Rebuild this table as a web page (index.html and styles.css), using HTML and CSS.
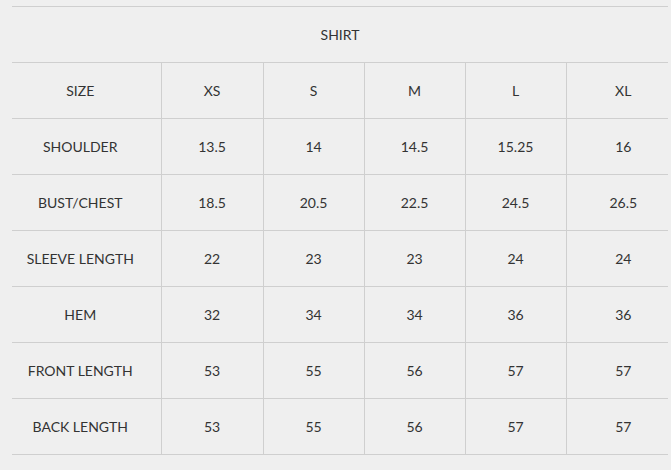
FILE: index.html
```html
<!DOCTYPE html>
<html>
<head>
<meta charset="utf-8">
<link rel="stylesheet" href="styles.css">
</head>
<body>
<table class="size-table">
  <colgroup>
    <col class="c-label"><col class="c-wide"><col class="c-std"><col class="c-std"><col class="c-std"><col class="c-last">
  </colgroup>
  <tr><td class="title" colspan="6">SHIRT</td></tr>
  <tr><td>SIZE</td><td>XS</td><td>S</td><td>M</td><td>L</td><td>XL</td></tr>
  <tr><td>SHOULDER</td><td>13.5</td><td>14</td><td>14.5</td><td>15.25</td><td>16</td></tr>
  <tr><td>BUST/CHEST</td><td>18.5</td><td>20.5</td><td>22.5</td><td>24.5</td><td>26.5</td></tr>
  <tr><td>SLEEVE LENGTH</td><td>22</td><td>23</td><td>23</td><td>24</td><td>24</td></tr>
  <tr><td>HEM</td><td>32</td><td>34</td><td>34</td><td>36</td><td>36</td></tr>
  <tr><td>FRONT LENGTH</td><td>53</td><td>55</td><td>56</td><td>57</td><td>57</td></tr>
  <tr><td>BACK LENGTH</td><td>53</td><td>55</td><td>56</td><td>57</td><td>57</td></tr>
</table>
</body>
</html>
```
FILE: styles.css
```css
html, body {
  margin: 0;
  padding: 0;
  background: #efefef;
}
body {
  padding: 6px 0 0 12px;
  font-family: Lato, "Liberation Sans", sans-serif;
  font-size: 14px;
  color: #333;
}
.size-table {
  border-collapse: collapse;
  table-layout: fixed;
  width: 656px;
  border-top: 1px solid #cfcfcf;
}
.c-label { width: 149px; }
.c-wide { width: 102px; }
.c-std { width: 101px; }
.c-last { width: 102px; }
.size-table td {
  height: 55px;
  padding: 0;
  text-align: center;
  vertical-align: middle;
  white-space: nowrap;
  border-bottom: 1px solid #cfcfcf;
  border-left: 1px solid #cfcfcf;
}
.size-table td:first-child {
  padding-right: 12px;
  border-left: none;
}
.size-table td:last-child {
  padding-left: 12px;
}
.size-table td.title {
  padding: 0;
  border-left: none;
}
```
